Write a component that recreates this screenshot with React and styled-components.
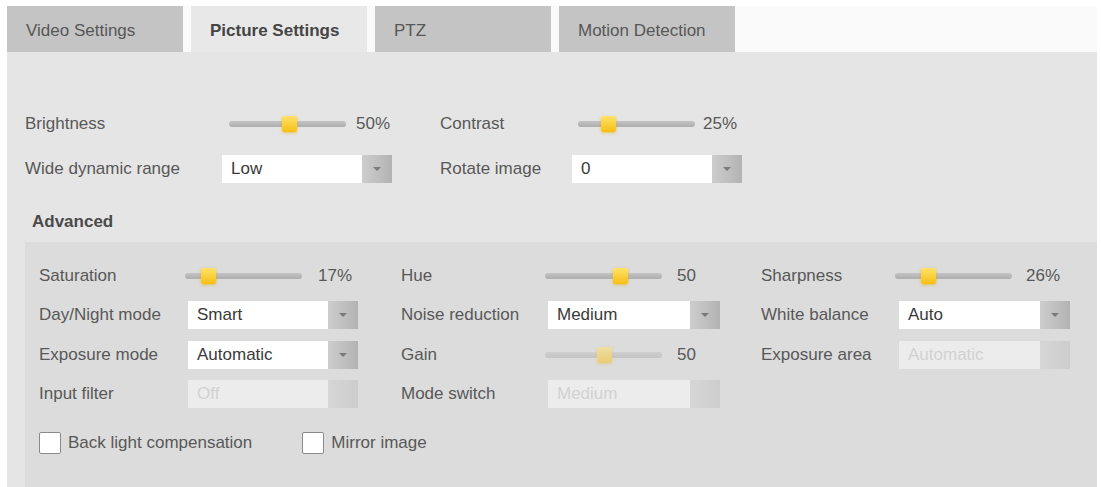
import styled, { createGlobalStyle } from "styled-components";

const GlobalStyle = createGlobalStyle`
  body {
    margin: 0;
    background: #ffffff;
    font-family: "Liberation Sans", Arial, sans-serif;
  }
`;

const Page = styled.div`
  width: 1101px;
  height: 487px;
  padding: 6px 4px 0 7px;
  box-sizing: border-box;
  overflow: hidden;
`;

const TabBar = styled.div`
  display: flex;
  gap: 8px;
  height: 46px;
  background: #fbfafb;
`;

const Tab = styled.div`
  width: 176px;
  padding: 3px 0 0 19px;
  box-sizing: border-box;
  display: flex;
  align-items: center;
  font-size: 17px;
  font-weight: ${(p) => (p.$active ? 700 : 400)};
  color: ${(p) => (p.$active ? "#454545" : "#575757")};
  background: ${(p) => (p.$active ? "#e8e8e8" : "#c4c4c4")};
`;

const Panel = styled.div`
  background: #e5e5e5;
  padding: 49px 0 0 18px;
  height: 435px;
  box-sizing: border-box;
  display: flex;
  flex-direction: column;
`;

const Columns = styled.div`
  display: flex;
  gap: ${(p) => p.$gap}px;
`;

const Column = styled.div`
  display: grid;
  grid-template-columns: ${(p) => p.$label}px ${(p) => p.$control}px;
  grid-auto-rows: ${(p) => p.$row}px;
  align-items: center;
`;

const Label = styled.div`
  font-size: 17px;
  color: #585858;
  white-space: nowrap;
`;

const SliderWrap = styled.div`
  display: flex;
  align-items: center;
  gap: ${(p) => p.$gap}px;
  margin-left: ${(p) => p.$inset}px;
`;

const Track = styled.div`
  position: relative;
  width: 117px;
  height: 6px;
  border-radius: 3px;
  background: linear-gradient(#c4c4c4, #adadad);
  opacity: ${(p) => (p.$disabled ? 0.5 : 1)};
`;

const Thumb = styled.div`
  position: absolute;
  top: -5px;
  width: 15px;
  height: 16px;
  margin-left: -7px;
  border-radius: 2px;
  background: linear-gradient(#ffe26a, #f7bf14);
  box-shadow: 0 1px 3px rgba(240, 170, 0, 0.6);
`;

const Value = styled.span`
  font-size: 17px;
  color: #585858;
`;

const SelectBox = styled.div`
  display: flex;
  height: 28px;
  width: ${(p) => p.$width}px;
  background: ${(p) => (p.$disabled ? "#ececec" : "#ffffff")};
`;

const SelectText = styled.div`
  flex: 1;
  padding-left: 9px;
  display: flex;
  align-items: center;
  font-size: 17px;
  color: ${(p) => (p.$disabled ? "#d2d2d2" : "#3a3a3a")};
`;

const SelectButton = styled.div`
  width: 30px;
  display: flex;
  align-items: center;
  justify-content: center;
  background: ${(p) =>
    p.$disabled
      ? "linear-gradient(90deg, #d6d6d6, #cdcdcd)"
      : "linear-gradient(90deg, #cdcdcd, #b3b3b3)"};
  &::after {
    content: "";
    display: ${(p) => (p.$disabled ? "none" : "block")};
    border-left: 4px solid transparent;
    border-right: 4px solid transparent;
    border-top: 4px solid #7a7a7a;
  }
`;

const Heading = styled.div`
  font-size: 17px;
  font-weight: 700;
  color: #4a4a4a;
  padding: 21px 0 0 7px;
  height: 51px;
  box-sizing: border-box;
`;

const Advanced = styled.div`
  flex: 1;
  background: #dcdcdc;
  padding: 14px 0 0 14px;
`;

const CheckRow = styled.div`
  display: flex;
  align-items: center;
  gap: 50px;
  margin-top: 18px;
`;

const Check = styled.label`
  display: flex;
  align-items: center;
  gap: 7px;
  font-size: 17px;
  color: #585858;
`;

const Box = styled.span`
  width: 20px;
  height: 20px;
  background: #ffffff;
  border: 1px solid #8a8a8a;
  border-radius: 2px;
`;

const Slider = ({ value, pct, inset = 7, gap = 9, disabled }) => (
  <SliderWrap $inset={inset} $gap={gap}>
    <Track $disabled={disabled}>
      <Thumb style={{ left: `${pct}%` }} />
    </Track>
    <Value>{value}</Value>
  </SliderWrap>
);

const Select = ({ text, width = 170, disabled }) => (
  <SelectBox $width={width} $disabled={disabled}>
    <SelectText $disabled={disabled}>{text}</SelectText>
    <SelectButton $disabled={disabled} />
  </SelectBox>
);

export default function App() {
  return (
    <>
      <GlobalStyle />
      <Page>
        <TabBar>
          <Tab>Video Settings</Tab>
          <Tab $active>Picture Settings</Tab>
          <Tab>PTZ</Tab>
          <Tab>Motion Detection</Tab>
        </TabBar>
        <Panel>
          <Columns $gap={48}>
            <Column $label={197} $control={170} $row={45}>
              <Label>Brightness</Label>
              <Slider value="50%" pct={51} gap={10} />
              <Label>Wide dynamic range</Label>
              <Select text="Low" />
            </Column>
            <Column $label={132} $control={170} $row={45}>
              <Label>Contrast</Label>
              <Slider value="25%" pct={26} inset={6} gap={8} />
              <Label>Rotate image</Label>
              <Select text="0" />
            </Column>
          </Columns>
          <Heading>Advanced</Heading>
          <Advanced>
            <Columns $gap={43}>
              <Column $label={149} $control={170} $row={39.5}>
                <Label>Saturation</Label>
                <Slider value="17%" pct={20} inset={-3} gap={16} />
                <Label>Day/Night mode</Label>
                <Select text="Smart" />
                <Label>Exposure mode</Label>
                <Select text="Automatic" />
                <Label>Input filter</Label>
                <Select text="Off" disabled />
              </Column>
              <Column $label={147} $control={170} $row={39.5}>
                <Label>Hue</Label>
                <Slider value="50" pct={64} inset={-3} gap={15} />
                <Label>Noise reduction</Label>
                <Select text="Medium" width={172} />
                <Label>Gain</Label>
                <Slider value="50" pct={50} inset={-3} gap={15} disabled />
                <Label>Mode switch</Label>
                <Select text="Medium" width={172} disabled />
              </Column>
              <Column $label={138} $control={171} $row={39.5}>
                <Label>Sharpness</Label>
                <Slider value="26%" pct={28} inset={-4} gap={14} />
                <Label>White balance</Label>
                <Select text="Auto" width={171} />
                <Label>Exposure area</Label>
                <Select text="Automatic" width={171} disabled />
              </Column>
            </Columns>
            <CheckRow>
              <Check>
                <Box />
                Back light compensation
              </Check>
              <Check>
                <Box />
                Mirror image
              </Check>
            </CheckRow>
          </Advanced>
        </Panel>
      </Page>
    </>
  );
}
